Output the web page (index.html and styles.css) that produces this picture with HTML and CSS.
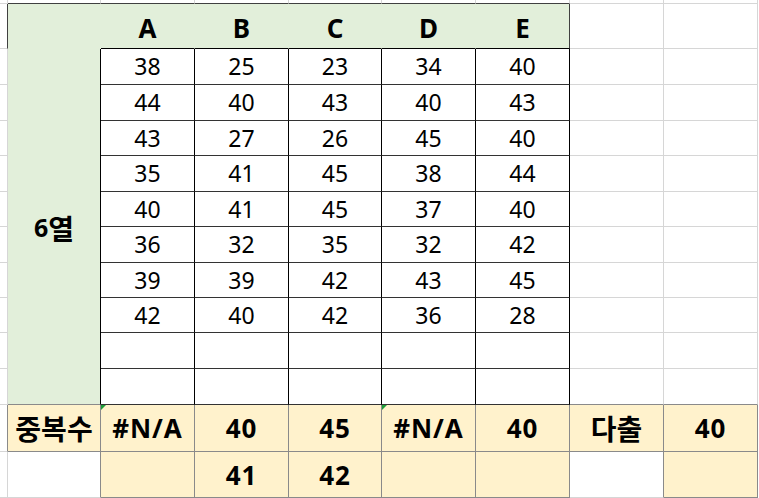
FILE: index.html
```html
<!DOCTYPE html>
<html lang="ko">
<head>
<meta charset="utf-8">
<title>6열 중복수</title>
<link rel="stylesheet" href="styles.css">
</head>
<body>
<div class="sheet">
  <!-- row 1: top strip -->
  <div class="c"></div>
  <div class="c top"></div><div class="c top"></div><div class="c top"></div><div class="c top"></div><div class="c top"></div><div class="c top"></div>
  <div class="c"></div><div class="c"></div><div class="edge"></div>

  <!-- row 2: header -->
  <div class="c lb"></div>
  <div class="c g"></div>
  <div class="c g h">A</div><div class="c g h">B</div><div class="c g h">C</div><div class="c g h">D</div><div class="c g h hr">E</div>
  <div class="c"></div><div class="c"></div><div class="edge"></div>

  <!-- row 3 -->
  <div class="c"></div>
  <div class="c g side"><span>6</span><span class="ko">열</span></div>
  <div class="c d">38</div><div class="c d">25</div><div class="c d">23</div><div class="c d">34</div><div class="c d">40</div>
  <div class="c"></div><div class="c"></div><div class="edge"></div>

  <div class="c"></div>
  <div class="c d">44</div><div class="c d">40</div><div class="c d">43</div><div class="c d">40</div><div class="c d">43</div>
  <div class="c"></div><div class="c"></div><div class="edge"></div>

  <div class="c"></div>
  <div class="c d">43</div><div class="c d">27</div><div class="c d">26</div><div class="c d">45</div><div class="c d">40</div>
  <div class="c"></div><div class="c"></div><div class="edge"></div>

  <div class="c"></div>
  <div class="c d">35</div><div class="c d">41</div><div class="c d">45</div><div class="c d">38</div><div class="c d">44</div>
  <div class="c"></div><div class="c"></div><div class="edge"></div>

  <div class="c"></div>
  <div class="c d">40</div><div class="c d">41</div><div class="c d">45</div><div class="c d">37</div><div class="c d">40</div>
  <div class="c"></div><div class="c"></div><div class="edge"></div>

  <div class="c"></div>
  <div class="c d">36</div><div class="c d">32</div><div class="c d">35</div><div class="c d">32</div><div class="c d">42</div>
  <div class="c"></div><div class="c"></div><div class="edge"></div>

  <div class="c"></div>
  <div class="c d">39</div><div class="c d">39</div><div class="c d">42</div><div class="c d">43</div><div class="c d">45</div>
  <div class="c"></div><div class="c"></div><div class="edge"></div>

  <div class="c"></div>
  <div class="c d">42</div><div class="c d">40</div><div class="c d">42</div><div class="c d">36</div><div class="c d">28</div>
  <div class="c"></div><div class="c"></div><div class="edge"></div>

  <div class="c"></div>
  <div class="c d"></div><div class="c d"></div><div class="c d"></div><div class="c d"></div><div class="c d"></div>
  <div class="c"></div><div class="c"></div><div class="edge"></div>

  <div class="c"></div>
  <div class="c d"></div><div class="c d"></div><div class="c d"></div><div class="c d"></div><div class="c d"></div>
  <div class="c yt"></div><div class="c yt"></div><div class="edge"></div>

  <!-- row 13: summary -->
  <div class="c yl"></div>
  <div class="c y"><span class="ko">중복수</span></div>
  <div class="c y err">#N/A</div>
  <div class="c y">40</div>
  <div class="c y">45</div>
  <div class="c y err">#N/A</div>
  <div class="c y">40</div>
  <div class="c y"><span class="ko">다출</span></div>
  <div class="c y">40</div>
  <div class="edge"></div>

  <!-- row 14 -->
  <div class="c"></div>
  <div class="c yl"></div>
  <div class="c y"></div>
  <div class="c y">41</div>
  <div class="c y">42</div>
  <div class="c y"></div>
  <div class="c y"></div>
  <div class="c yl"></div>
  <div class="c y"></div>
  <div class="edge"></div>
</div>
</body>
</html>
```

FILE: styles.css
```css
* { box-sizing: border-box; }

html, body {
  margin: 0;
  padding: 0;
  background: #ffffff;
  overflow: hidden;
}

body {
  font-family: "Noto Sans", "Noto Sans CJK KR", sans-serif;
  color: #000;
}

.sheet {
  display: grid;
  grid-template-columns: 8px 93px 94px 94px 93px 94px 94px 94px 94px 1px;
  grid-template-rows: 4px 45px 36px 36px 35px 36px 35px 36px 35px 35px 36px 36px 47px 46px;
  width: 759px;
  height: 498px;
}

.c {
  border-right: 1px solid #d6d6d6;
  border-bottom: 1px solid #d6d6d6;
  display: flex;
  align-items: center;
  justify-content: center;
  line-height: 1;
  font-size: 23px;
  white-space: nowrap;
}

.edge { background: #fff; }

.top { border-bottom-color: #404040; }
.lb { border-right-color: #404040; }

.g {
  background: #e2efda;
  border-right-color: transparent;
  border-bottom-color: transparent;
}

.h {
  font-weight: 700;
  font-size: 26px;
  border-bottom-color: #000;
  padding-top: 3px;
}
.hr { border-right-color: #404040; }

.side {
  grid-row: span 10;
  border-right-color: #000;
  border-bottom-color: #8a8a8a;
  font-weight: 700;
  font-size: 25px;
  padding-top: 2px;
}

.d {
  background: #fff;
  border-right-color: #000;
  border-bottom-color: #333;
}

.yt { border-bottom-color: #8a8a8a; }
.yl { border-right-color: #8a8a8a; }

.y {
  background: #fff2cc;
  border-right-color: #8a8a8a;
  border-bottom-color: #8a8a8a;
  font-weight: 700;
  font-size: 26px;
  letter-spacing: 1px;
  position: relative;
}

.ko {
  font-family: "Noto Sans CJK KR", sans-serif;
  font-size: 28px;
  font-weight: 700;
  letter-spacing: 0;
}

.err::before {
  content: "";
  position: absolute;
  left: 0;
  top: 0;
  width: 0;
  height: 0;
  border-top: 5px solid #1f9d3a;
  border-right: 5px solid transparent;
}
```
